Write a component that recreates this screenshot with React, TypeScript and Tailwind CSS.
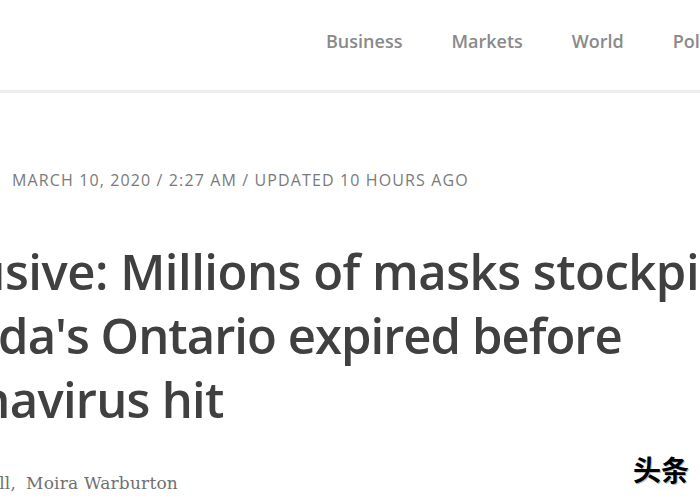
import React from "react";

const navItems = ["Business", "Markets", "World", "Politics", "Tech"];

export default function App() {
  return (
    <div className="w-[700px] h-[500px] overflow-hidden bg-white relative">
      <header className="h-[93px] border-b-[3px] border-[#eeeeee] flex items-start pt-[28px] pl-[326px] whitespace-nowrap">
        <nav className="flex gap-[49px] text-[18px] font-semibold text-[#8a8a8a] font-['Open_Sans',sans-serif]">
          {navItems.map((item) => (
            <span key={item}>{item}</span>
          ))}
        </nav>
      </header>

      <div className="pt-[79px] pl-[12px] text-[16px] tracking-[0.07em] text-[#7a7a7a] font-['Open_Sans',sans-serif] whitespace-nowrap leading-none">
        MARCH 10, 2020 / 2:27 AM / UPDATED 10 HOURS AGO
      </div>

      <h1 className="mt-[51px] text-[49px] leading-[64px] font-semibold text-[#404040] font-['Open_Sans',sans-serif] whitespace-nowrap">
        <div className="ml-[-116px] tracking-[-0.01em]">Exclusive: Millions of masks stockpiled in</div>
        <div className="ml-[-117px] tracking-[-0.02em]">Canada's Ontario expired before</div>
        <div className="ml-[-123px] tracking-[-0.015em]">coronavirus hit</div>
      </h1>

      <div className="ml-[-148px] mt-[42px] text-[17px] leading-[20px] tracking-[0.2px] text-[#707070] font-['DejaVu_Serif',serif] whitespace-nowrap">
        By Allison Martell,<span className="ml-[10px]">Moira Warburton</span>
      </div>

      <div className="absolute right-[11px] bottom-[17px] text-[28px] leading-none font-bold text-black font-['Noto_Sans_CJK_SC',sans-serif] [text-shadow:1px_1px_0_#bbbbbb]">
        头条
      </div>
    </div>
  );
}
